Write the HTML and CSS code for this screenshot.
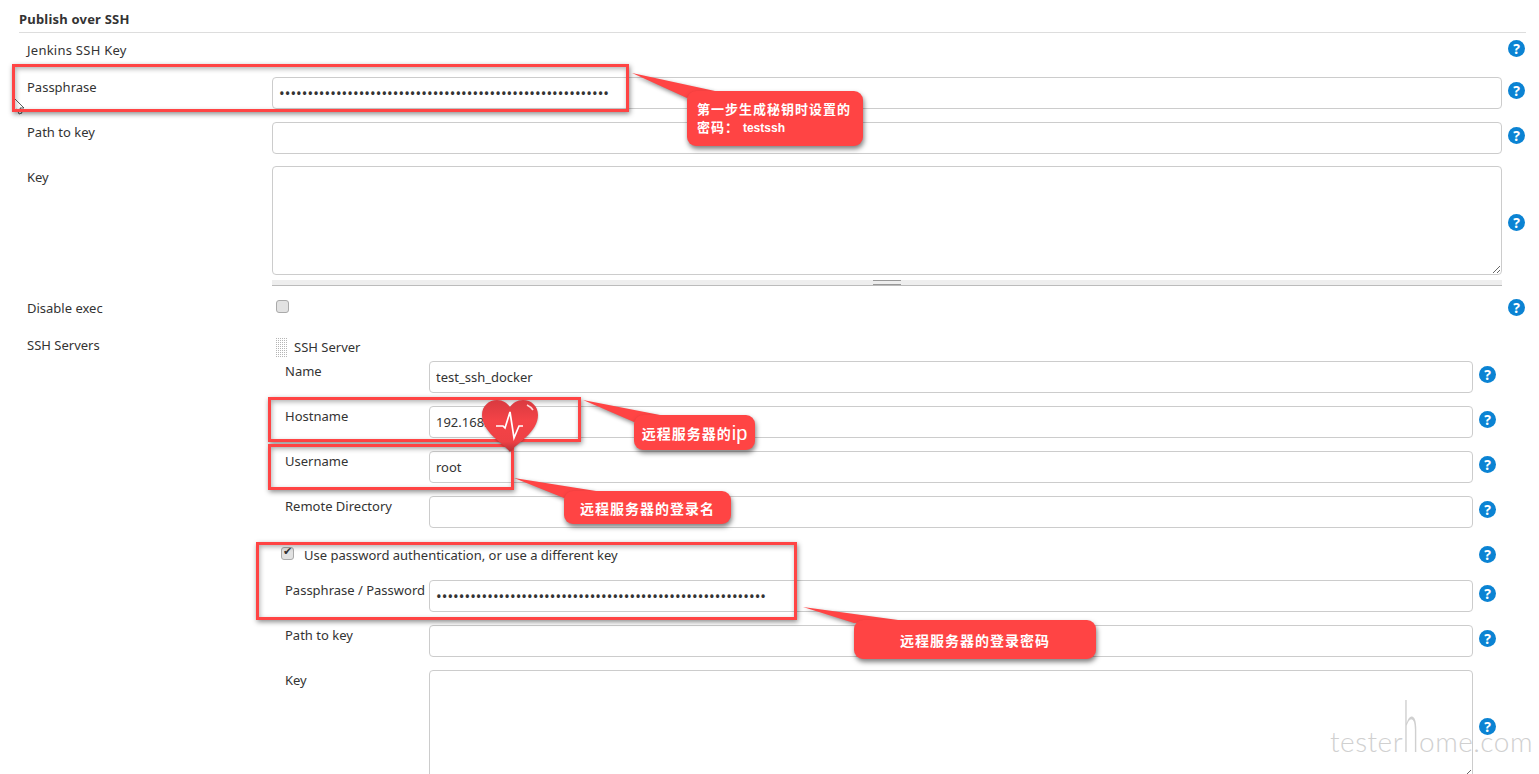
FILE: index.html
```html
<!DOCTYPE html>
<html lang="zh">
<head>
    <meta charset="UTF-8">
    <title>Publish over SSH</title>
    <link rel="stylesheet" href="styles.css">
</head>
<body>
    <div class="page">
        <h2 class="section-title">Publish over SSH</h2>

        <div class="row row-plain">
            <label>Jenkins SSH Key</label>
            <span></span>
            <span class="help">?</span>
        </div>
        <div class="row">
            <label>Passphrase</label>
            <input type="password" class="dots" value="1234567890123456789012345678901234567890123456789012345678">
            <span class="help">?</span>
        </div>
        <div class="row row-before-key">
            <label>Path to key</label>
            <input type="text">
            <span class="help">?</span>
        </div>
        <div class="row row-key row-key-top">
            <label>Key</label>
            <div class="key-box">
                <textarea></textarea>
                <div class="grip"><span class="grip-handle"></span></div>
            </div>
            <span class="help">?</span>
        </div>
        <div class="row row-disable">
            <label>Disable exec</label>
            <div><input type="checkbox" class="check"></div>
            <span class="help">?</span>
        </div>

        <div class="row row-servers">
            <label>SSH Servers</label>
            <div class="server">
                <div class="server-head">
                    <span class="drag-dots"></span>
                    <span>SSH Server</span>
                </div>
                <div class="row">
                    <label>Name</label>
                    <input type="text" value="test_ssh_docker">
                    <span class="help">?</span>
                </div>
                <div class="row">
                    <label>Hostname</label>
                    <input type="text" value="192.168.1.100">
                    <span class="help">?</span>
                </div>
                <div class="row">
                    <label>Username</label>
                    <input type="text" value="root">
                    <span class="help">?</span>
                </div>
                <div class="row">
                    <label>Remote Directory</label>
                    <input type="text">
                    <span class="help">?</span>
                </div>
                <div class="row-usepass">
                    <input type="checkbox" class="check" checked>
                    <span class="usepass-text">Use password authentication, or use a different key</span>
                    <span class="help">?</span>
                </div>
                <div class="row">
                    <label>Passphrase / Password</label>
                    <input type="password" class="dots" value="1234567890123456789012345678901234567890123456789012345678">
                    <span class="help">?</span>
                </div>
                <div class="row">
                    <label>Path to key</label>
                    <input type="text">
                    <span class="help">?</span>
                </div>
                <div class="row row-key">
                    <label>Key</label>
                    <textarea></textarea>
                    <span class="help">?</span>
                </div>
            </div>
        </div>
    </div>

    <!-- annotations drawn on top of the screenshot -->
    <svg class="overlay" width="1539" height="774" viewBox="0 0 1539 774">
        <g class="tails">
            <polygon points="632,73 715,91 687,98"/>
            <polygon points="583,400 660,415 634,422"/>
            <polygon points="514,478 596,491 564,498"/>
            <polygon points="803,607 898,620 854,623"/>
        </g>
        <path class="cursor" d="M14 98 L14 111 L17 109 L19 114 L22 113 L20 108 L24 108 Z"/>
    </svg>

    <div class="mark mark-pass"></div>
    <div class="mark mark-host"></div>
    <div class="mark mark-user"></div>
    <div class="mark mark-auth"></div>

    <div class="bubble bubble-pass">第一步生成秘钥时设置的<br>密码： <span class="latin">testssh</span></div>
    <div class="bubble bubble-host">远程服务器的<span class="ip">ip</span></div>
    <div class="bubble bubble-user">远程服务器的登录名</div>
    <div class="bubble bubble-auth">远程服务器的登录密码</div>

    <svg class="heart" width="60" height="56" viewBox="0 0 60 56">
        <defs>
            <linearGradient id="heartFill" x1="0" y1="0" x2="0" y2="1">
                <stop offset="0" stop-color="#d93a40"/>
                <stop offset="0.4" stop-color="#f44347"/>
                <stop offset="0.8" stop-color="#ee4145"/>
                <stop offset="1" stop-color="#b53035"/>
            </linearGradient>
        </defs>
        <path d="M30 53 C22 43 2 33 2 16 C2 7 9 1 17 1 C23 1 27 4 30 8 C33 4 37 1 43 1 C51 1 58 7 58 16 C58 33 38 43 30 53 Z" fill="url(#heartFill)"/>
        <path d="M16 27 H23 L25 29 L30 13 L34 39 L39 27 H43" fill="none" stroke="#fff" stroke-width="1.7"/>
        <path d="M47 6 Q51 8 53 11" fill="none" stroke="#ffd9da" stroke-width="1.6"/>
    </svg>

    <div class="watermark">tester<span class="watermark-h">h</span>ome.com</div>
</body>
</html>
```

FILE: styles.css
```css
html, body {
    margin: 0;
    height: 774px;
    overflow: hidden;
    background: #fff;
}

body {
    font-family: "Noto Sans", "Noto Sans CJK SC", sans-serif;
    font-size: 13px;
    line-height: 17px;
    color: #333;
    position: relative;
}

.section-title {
    margin: 0 13px 0 19px;
    height: 32px;
    border-bottom: 1px solid #ddd;
    font-size: 13px;
    line-height: 38px;
    font-weight: 700;
    letter-spacing: 0.2px;
}

.row {
    display: grid;
    grid-template-columns: 245px 1fr 37px;
    padding-left: 27px;
    margin-bottom: 13px;
}

.row label {
    padding-top: 2px;
}

.row-plain {
    height: 44px;
    margin-bottom: 0;
}

.row-plain label {
    padding-top: 9px;
    letter-spacing: 0.25px;
}

.row-plain .help {
    margin-top: 7px;
}

.row-before-key {
    margin-bottom: 12px;
}

.row-key {
    margin-bottom: 0;
}

.row-key .help {
    margin-top: 48px;
}

.row-key-top label {
    padding-top: 3px;
}

input[type="text"],
input[type="password"],
textarea {
    box-sizing: border-box;
    width: 100%;
    height: 32px;
    margin: 0;
    padding: 0 6px;
    border: 1px solid #ccc;
    border-radius: 4px;
    font-family: inherit;
    font-size: 13px;
    color: #333;
    background: #fff;
}

textarea {
    display: block;
    height: 109px;
}

input.dots {
    font-size: 15px;
    letter-spacing: 0.05px;
}

.grip {
    height: 6px;
    margin-top: 5px;
    background: #eee;
    border-bottom: 1px solid #bbb;
    display: flex;
    justify-content: center;
    box-sizing: border-box;
}

.grip-handle {
    box-sizing: border-box;
    width: 28px;
    height: 5px;
    border-top: 1px solid #999;
    border-bottom: 1px solid #999;
}

.help {
    display: block;
    width: 17px;
    height: 17px;
    margin: 5px 0 0 6px;
    border-radius: 50%;
    background: #0b83d3;
    color: #fff;
    font-size: 14px;
    font-weight: 700;
    line-height: 17px;
    text-align: center;
}

.check {
    appearance: none;
    display: block;
    box-sizing: border-box;
    width: 13px;
    height: 13px;
    margin: 0;
    border: 1px solid #aaa;
    border-radius: 3px;
    background: #e2e2e2;
    position: relative;
}

.check:checked::after {
    content: "✔";
    position: absolute;
    left: 1px;
    top: -3px;
    font-size: 11px;
    color: #333;
}

.row-disable {
    margin-top: 12px;
    margin-bottom: 0;
}

.row-disable .check {
    margin: 2px 0 0 4px;
}

.row-disable .help {
    margin-top: 1px;
}

.row-servers {
    margin-top: 20px;
    margin-bottom: 0;
    grid-template-columns: 245px 1fr;
}

.row-servers > label {
    padding-top: 0;
}

.server .row {
    grid-template-columns: 144px 1fr 66px;
    padding-left: 13px;
}

.server-head {
    display: flex;
    align-items: center;
    gap: 7px;
    height: 17px;
    margin: 2px 0 5px 3px;
}

.drag-dots {
    width: 12px;
    height: 20px;
    background-image: conic-gradient(#b5b5b5 25%, transparent 0);
    background-size: 2px 2px;
}

.row-usepass {
    display: flex;
    align-items: center;
    height: 26px;
    padding-left: 9px;
    margin-bottom: 13px;
}

.row-usepass .check {
    margin-top: -2px;
}

.usepass-text {
    margin: 2px 0 0 10px;
    flex: 1;
}

.row-usepass .help {
    margin: 0 43px 0 0;
}

/* annotations */
.overlay {
    position: absolute;
    left: 0;
    top: 0;
}

.tails polygon {
    fill: #ff4444;
    filter: drop-shadow(1px 2px 2px rgba(0, 0, 0, 0.45));
}

.cursor {
    fill: #fff;
    stroke: #333;
    stroke-width: 0.8;
}

.mark {
    position: absolute;
    box-sizing: border-box;
    border: 3px solid #ff4444;
    box-shadow: 1px 2px 5px rgba(0, 0, 0, 0.45), inset 1px 2px 5px rgba(0, 0, 0, 0.3);
}

.mark-pass { left: 12px; top: 64px; width: 617px; height: 48px; }
.mark-host { left: 268px; top: 397px; width: 313px; height: 45px; }
.mark-user { left: 268px; top: 444px; width: 246px; height: 46px; }
.mark-auth { left: 256px; top: 542px; width: 541px; height: 78px; }

.bubble {
    position: absolute;
    box-sizing: border-box;
    display: flex;
    align-items: center;
    justify-content: center;
    text-align: center;
    background: #ff4444;
    border-radius: 9px;
    box-shadow: 1px 3px 5px rgba(0, 0, 0, 0.5);
    color: #fff;
    font-weight: 700;
    font-size: 14px;
    letter-spacing: 1px;
    line-height: 18px;
    font-family: "Noto Sans CJK SC", sans-serif;
}

.bubble-pass {
    left: 687px;
    top: 91px;
    width: 176px;
    height: 55px;
    display: block;
    padding: 9px 0 0 10px;
    text-align: left;
    font-size: 13px;
}

.bubble-host { left: 634px; top: 415px; width: 121px; height: 35px; }
.bubble-user { left: 564px; top: 491px; width: 167px; height: 33px; }
.bubble-auth { left: 854px; top: 620px; width: 242px; height: 39px; }

.latin {
    font-family: "Liberation Sans", sans-serif;
    font-size: 12px;
    letter-spacing: 0;
}

.ip {
    font-family: "Liberation Sans", sans-serif;
    font-size: 20px;
    font-weight: 400;
    letter-spacing: 0;
}

.heart {
    position: absolute;
    left: 480px;
    top: 399px;
    filter: drop-shadow(0 1px 1px rgba(0, 0, 0, 0.3));
}

.watermark {
    position: absolute;
    left: 1330px;
    top: 736px;
    font-family: "Lato", sans-serif;
    font-weight: 300;
    font-size: 28px;
    line-height: 10px;
    letter-spacing: 0.5px;
    color: #d0d0d0;
    white-space: nowrap;
}

.watermark-h {
    display: inline-block;
    transform: scaleY(2.5);
    transform-origin: 50% 16px;
}
```
